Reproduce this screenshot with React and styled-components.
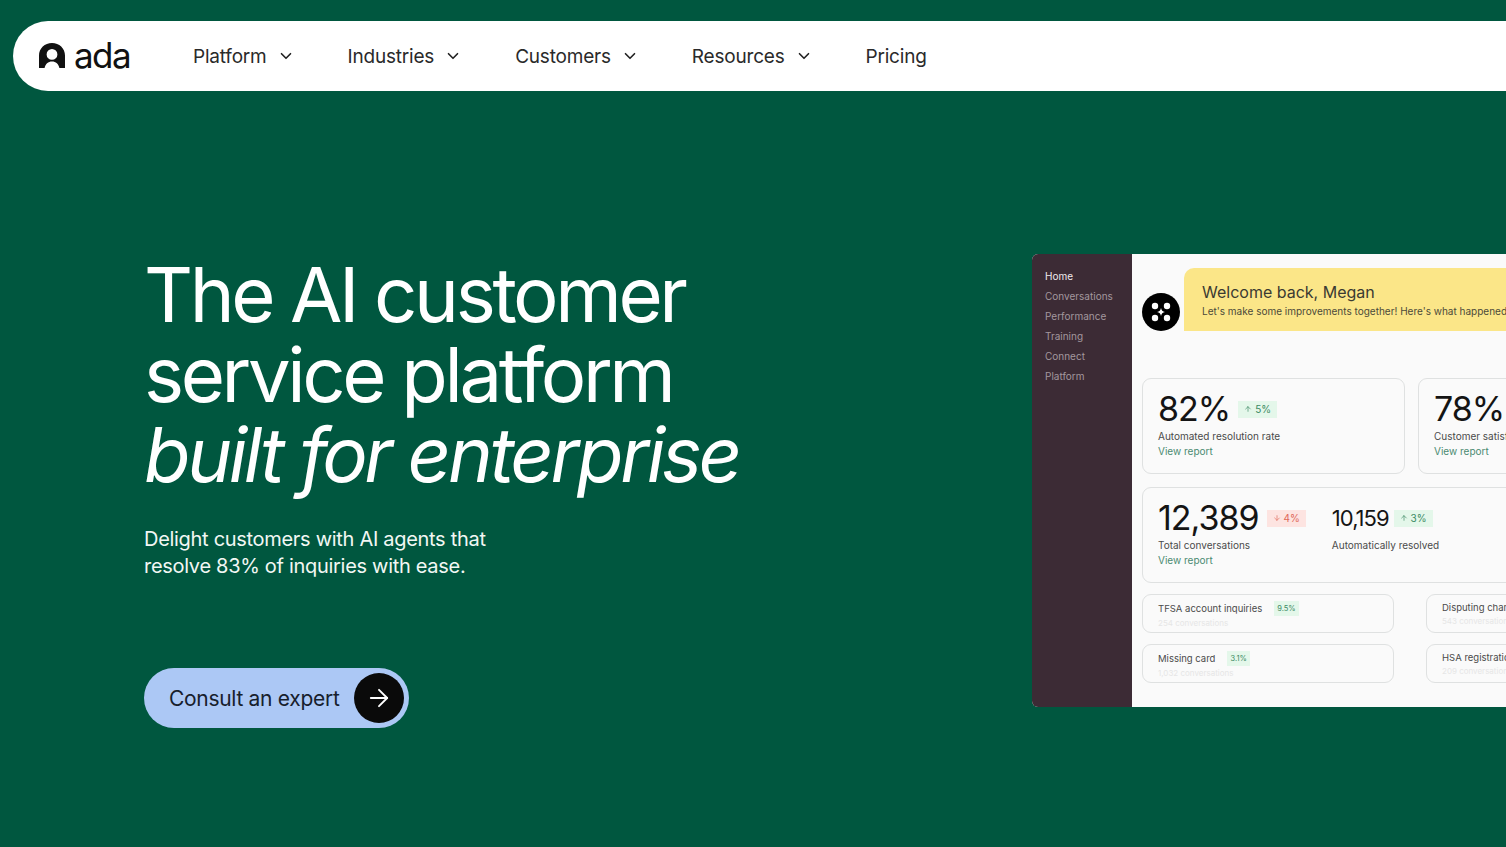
import React from 'react';
import styled, { createGlobalStyle } from 'styled-components';
import { ChevronDown, ArrowRight, ArrowUp, ArrowDown } from 'lucide-react';

const GlobalStyle = createGlobalStyle`
  html, body {
    margin: 0;
    padding: 0;
    height: 100%;
    overflow: hidden;
    background: #00573f;
    font-family: Inter, "Liberation Sans", sans-serif;
  }
`;

const Page = styled.div`
  width: 1506px;
  height: 847px;
  overflow: hidden;
  padding: 21px 0 0 13px;
  box-sizing: border-box;
`;

const NavBar = styled.nav`
  height: 70px;
  background: #fff;
  border-radius: 35px 0 0 35px;
  display: flex;
  align-items: center;
  padding-left: 26px;
`;

const LogoWrap = styled.div`
  display: flex;
  align-items: center;
  gap: 9px;
  width: 154px;
  color: #111;
`;

const LogoText = styled.span`
  font-size: 35px;
  letter-spacing: -1.6px;
  line-height: 1;
  margin-top: -2px;
`;

const NavLinks = styled.div`
  display: flex;
  align-items: center;
  gap: 53px;
`;

const NavLink = styled.a`
  display: flex;
  align-items: center;
  gap: 10px;
  font-size: 19px;
  color: #2a2a2a;
  letter-spacing: -0.2px;
`;

const Hero = styled.section`
  display: flex;
  justify-content: space-between;
  align-items: flex-start;
  margin-top: 163px;
  padding-left: 131px;
`;

const HeroText = styled.div`
  color: #fff;
`;

const Title = styled.h1`
  margin: 0;
  font-size: 76px;
  line-height: 80px;
  font-weight: 400;
  letter-spacing: -3.4px;
  white-space: nowrap;
  padding-top: -10px;

  em {
    font-style: italic;
  }
`;

const Lead = styled.p`
  margin: 32px 0 0;
  font-size: 20px;
  line-height: 27px;
  letter-spacing: -0.3px;
  color: #f2f7f4;
`;

const Cta = styled.a`
  display: inline-flex;
  align-items: center;
  height: 60px;
  margin-top: 88px;
  padding: 0 5px 0 25px;
  gap: 15px;
  border-radius: 30px;
  background: #acc8f5;
  color: #17202c;
  font-size: 21px;
  letter-spacing: -0.3px;
`;

const CtaIcon = styled.span`
  width: 50px;
  height: 50px;
  border-radius: 50%;
  background: #0a0a0a;
  color: #fff;
  display: flex;
  align-items: center;
  justify-content: center;
`;

const Dash = styled.div`
  flex: 0 0 auto;
  width: 474px;
  height: 453px;
  margin-top: 0;
  display: flex;
  border-radius: 6px 0 0 6px;
  overflow: hidden;
  background: #fafafa;
`;

const Side = styled.aside`
  flex: 0 0 100px;
  background: #3c2b35;
  padding: 12px 0 0 13px;
  box-sizing: border-box;
`;

const SideItem = styled.div`
  font-size: 10px;
  line-height: 20px;
  color: ${(p) => (p.$active ? '#efe9ec' : '#a3979e')};
`;

const Main = styled.div`
  flex: 1;
  min-width: 0;
  padding: 14px 0 0 10px;
  display: flex;
  flex-direction: column;
  overflow: hidden;
`;

const WelcomeRow = styled.div`
  display: flex;
  align-items: flex-end;
  gap: 4px;
  height: 63px;
`;

const Bot = styled.div`
  flex: 0 0 38px;
  height: 38px;
  border-radius: 50%;
  background: #000;
  display: flex;
  align-items: center;
  justify-content: center;
`;

const Banner = styled.div`
  flex: 0 0 500px;
  height: 63px;
  background: #fbe688;
  border-radius: 10px 0 0 0;
  padding: 14px 0 0 18px;
  box-sizing: border-box;
  white-space: nowrap;
`;

const BannerTitle = styled.div`
  font-size: 16px;
  line-height: 20px;
  color: #3a3a32;
`;

const BannerSub = styled.div`
  font-size: 10px;
  line-height: 18px;
  color: #4c4a3a;
`;

const Row = styled.div`
  display: flex;
  gap: 13px;
  width: 600px;
  margin-top: ${(p) => p.$top}px;
`;

const Card = styled.div`
  flex: 0 0 auto;
  width: ${(p) => p.$w}px;
  height: ${(p) => p.$h}px;
  box-sizing: border-box;
  border: 1px solid #dfe1e1;
  border-radius: 9px;
  padding: ${(p) => p.$pad};
  display: ${(p) => (p.$flex ? 'flex' : 'block')};
  gap: 26px;
`;

const Metric = styled.div`
  display: flex;
  align-items: center;
  gap: ${(p) => p.$gap || 8}px;
  height: 32px;
`;

const Num = styled.span`
  font-size: ${(p) => p.$size || 34}px;
  letter-spacing: -1px;
  color: #141414;
  line-height: 1;
`;

const Delta = styled.span`
  display: inline-flex;
  align-items: center;
  gap: 3px;
  height: 17px;
  padding: 0 6px;
  font-size: 10px;
  background: ${(p) => (p.$down ? '#fde4e1' : '#e4f7ea')};
  color: ${(p) => (p.$down ? '#e0695a' : '#3c8a63')};
`;

const Label = styled.div`
  font-size: 10px;
  line-height: 15px;
  margin-top: ${(p) => p.$top || 4}px;
  color: #4a4a4a;
  white-space: nowrap;
`;

const Report = styled.div`
  font-size: 10px;
  line-height: 15px;
  color: #4a8a72;
`;

const SmallTitle = styled.div`
  display: flex;
  align-items: center;
  gap: 12px;
  font-size: 9.5px;
  line-height: 13px;
  color: #4a4a4a;
  white-space: nowrap;
`;

const Pill = styled.span`
  font-size: 7.5px;
  padding: 1px 3px;
  background: #e4f7ea;
  color: #3c8a63;
`;

const Faint = styled.div`
  font-size: 8px;
  line-height: 12px;
  margin-top: 1px;
  color: #e6e6e6;
  white-space: nowrap;
`;

function AdaLogo() {
  return (
    <svg width="26" height="26" viewBox="0 0 26 26">
      <path
        fillRule="evenodd"
        fill="#111"
        d="M13 0C5.8 0 0 5.4 0 12.5V25h5.6c.6-4 3.6-6.6 7.4-6.6s6.800 2.600 7.400 6.600H26V12.500C26 5.400 20.200 0 13 0Zm0 6a5.400 5.400 0 1 1 0 10.800A5.400 5.400 0 0 1 13 6Z"
      />
    </svg>
  );
}

function BotMark() {
  return (
    <svg width="24" height="24" viewBox="0 0 24 24" fill="#fff">
      <circle cx="6" cy="6" r="3.200" />
      <circle cx="18" cy="6" r="3.200" />
      <circle cx="6" cy="18" r="3.200" />
      <circle cx="18" cy="18" r="3.200" />
      <path d="M12 8c.5 2.500 1.500 3.500 4 4-2.500.5-3.500 1.500-4 4-.5-2.500-1.500-3.500-4-4 2.500-.5 3.500-1.500 4-4Z" />
    </svg>
  );
}

const navItems = ['Platform', 'Industries', 'Customers', 'Resources'];
const sideItems = ['Conversations', 'Performance', 'Training', 'Connect', 'Platform'];

function App() {
  return (
    <Page>
      <GlobalStyle />
      <NavBar>
        <LogoWrap>
          <AdaLogo />
          <LogoText>ada</LogoText>
        </LogoWrap>
        <NavLinks>
          {navItems.map((item) => (
            <NavLink key={item}>
              {item}
              <ChevronDown size={18} strokeWidth={2.2} color="#222" />
            </NavLink>
          ))}
          <NavLink>Pricing</NavLink>
        </NavLinks>
      </NavBar>
      <Hero>
        <HeroText>
          <Title>
            The AI customer
            <br />
            service platform
            <br />
            <em>built for enterprise</em>
          </Title>
          <Lead>
            Delight customers with AI agents that
            <br />
            resolve 83% of inquiries with ease.
          </Lead>
          <Cta>
            Consult an expert
            <CtaIcon>
              <ArrowRight size={28} strokeWidth={1.6} />
            </CtaIcon>
          </Cta>
        </HeroText>
        <Dash>
          <Side>
            <SideItem $active>Home</SideItem>
            {sideItems.map((item) => (
              <SideItem key={item}>{item}</SideItem>
            ))}
          </Side>
          <Main>
            <WelcomeRow>
              <Bot>
                <BotMark />
              </Bot>
              <Banner>
                <BannerTitle>Welcome back, Megan</BannerTitle>
                <BannerSub>Let's make some improvements together! Here's what happened</BannerSub>
              </Banner>
            </WelcomeRow>
            <Row $top={47}>
              <Card $w={263} $h={96} $pad="14px 14px 0 15px">
                <Metric>
                  <Num>82%</Num>
                  <Delta>
                    <ArrowUp size={8} /> 5%
                  </Delta>
                </Metric>
                <Label>Automated resolution rate</Label>
                <Report>View report</Report>
              </Card>
              <Card $w={263} $h={96} $pad="14px 14px 0 15px">
                <Metric>
                  <Num>78%</Num>
                  <Delta>
                    <ArrowUp size={8} /> 2%
                  </Delta>
                </Metric>
                <Label>Customer satisfaction score</Label>
                <Report>View report</Report>
              </Card>
            </Row>
            <Row $top={13}>
              <Card $w={540} $h={96} $pad="14px 14px 0 15px" $flex>
                <div>
                  <Metric>
                    <Num>12,389</Num>
                    <Delta $down>
                      <ArrowDown size={8} /> 4%
                    </Delta>
                  </Metric>
                  <Label>Total conversations</Label>
                  <Report>View report</Report>
                </div>
                <div>
                  <Metric $gap={5}>
                    <Num $size={22}>10,159</Num>
                    <Delta>
                      <ArrowUp size={8} /> 3%
                    </Delta>
                  </Metric>
                  <Label>Automatically resolved</Label>
                </div>
              </Card>
            </Row>
            <Row $top={11}>
              <Card $w={252} $h={39} $pad="6px 15px 0">
                <SmallTitle>
                  TFSA account inquiries <Pill>9.5%</Pill>
                </SmallTitle>
                <Faint>254 conversations</Faint>
              </Card>
              <Card $w={252} $h={39} $pad="6px 15px 0" style={{ marginLeft: 19 }}>
                <SmallTitle>Disputing charges</SmallTitle>
                <Faint>543 conversations</Faint>
              </Card>
            </Row>
            <Row $top={11}>
              <Card $w={252} $h={39} $pad="6px 15px 0">
                <SmallTitle>
                  Missing card <Pill>3.1%</Pill>
                </SmallTitle>
                <Faint>1,032 conversations</Faint>
              </Card>
              <Card $w={252} $h={39} $pad="6px 15px 0" style={{ marginLeft: 19 }}>
                <SmallTitle>HSA registration</SmallTitle>
                <Faint>209 conversations</Faint>
              </Card>
            </Row>
          </Main>
        </Dash>
      </Hero>
    </Page>
  );
}

export default App;
